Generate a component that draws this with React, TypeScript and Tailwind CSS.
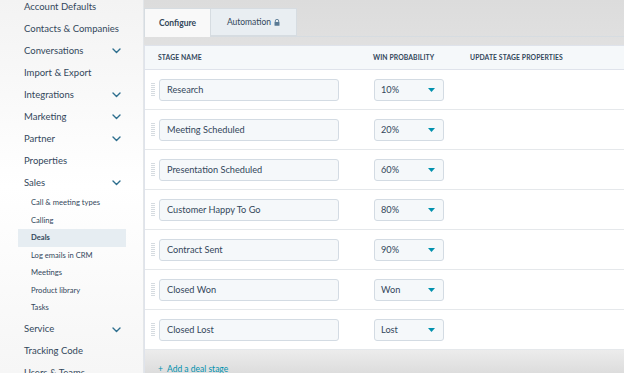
import React from "react";

const mainFont = { fontFamily: "Lato, 'Open Sans', sans-serif" };

function Chevron() {
  return (
    <svg width="9" height="6" viewBox="0 0 9 6" className="text-[#2d6e8e]">
      <path d="M1 1l3.5 3.5L8 1" fill="none" stroke="currentColor" strokeWidth="1.4" strokeLinecap="round" strokeLinejoin="round" />
    </svg>
  );
}

function MainItem({ label, chevron }: { label: string; chevron?: boolean }) {
  return (
    <div className="h-[22px] flex items-center justify-between pl-[24px] pr-[22px] text-[9.5px] text-[#33475b]">
      <span>{label}</span>
      {chevron && <Chevron />}
    </div>
  );
}

function SubItem({ label, active }: { label: string; active?: boolean }) {
  return (
    <div
      className={
        "h-[17.5px] flex items-center ml-[18px] mr-[17px] pl-[13px] text-[7.6px] text-[#33475b] " +
        (active ? "bg-[#e6edf2] font-bold" : "")
      }
    >
      {label}
    </div>
  );
}

function Handle() {
  return (
    <div className="flex flex-col gap-[1px] w-[4px] mr-[4px]">
      {Array.from({ length: 7 }).map((_, i) => (
        <div key={i} className="h-[1px] w-[4px] bg-[#d5dbe0]" />
      ))}
    </div>
  );
}

const rows: [string, string][] = [
  ["Research", "10%"],
  ["Meeting Scheduled", "20%"],
  ["Presentation Scheduled", "60%"],
  ["Customer Happy To Go", "80%"],
  ["Contract Sent", "90%"],
  ["Closed Won", "Won"],
  ["Closed Lost", "Lost"],
];

export default function App() {
  return (
    <div className="w-[624px] h-[373px] overflow-hidden flex bg-white text-[#33475b]" style={mainFont}>
      {/* Sidebar */}
      <div className="w-[144px] shrink-0 bg-gradient-to-b from-[#f3f3f3] via-white to-[#f6f6f6] border-r border-[#e3e6e9]">
        <div className="mt-[-4px]">
          <MainItem label="Account Defaults" />
          <MainItem label="Contacts & Companies" />
          <MainItem label="Conversations" chevron />
          <MainItem label="Import & Export" />
          <MainItem label="Integrations" chevron />
          <MainItem label="Marketing" chevron />
          <MainItem label="Partner" chevron />
          <MainItem label="Properties" />
          <MainItem label="Sales" chevron />
          <div className="mb-[2px]">
            <SubItem label="Call & meeting types" />
            <SubItem label="Calling" />
            <SubItem label="Deals" active />
            <SubItem label="Log emails in CRM" />
            <SubItem label="Meetings" />
            <SubItem label="Product library" />
            <SubItem label="Tasks" />
          </div>
          <MainItem label="Service" chevron />
          <MainItem label="Tracking Code" />
          <MainItem label="Users & Teams" />
        </div>
      </div>

      {/* Main */}
      <div className="flex-1 flex flex-col bg-gradient-to-b from-[#dcdcdc] via-[#eeeeee] to-[#f2f2f2]">
        {/* Tabs */}
        <div className="pt-[8px] mb-[8px]">
          <div className="flex h-[29px] border-b border-[#d6dce1] w-full">
            <div className="w-[67px] h-[29px] flex items-center justify-center bg-[#f9f9f9] border border-[#d6dce1] border-b-0 text-[8.5px] font-bold text-[#33475b]">
              Configure
            </div>
            <div className="w-[86px] h-[28px] flex items-center justify-center bg-[#e9eef2] border border-l-0 border-[#d6dce1] text-[8.5px] text-[#33475b] gap-[3px]">
              Automation
              <svg width="6" height="7" viewBox="0 0 6 7">
                <path d="M1.3 3V2a1.7 1.7 0 013.4 0v1" fill="none" stroke="#5a7a94" strokeWidth="0.9" />
                <rect x="0.5" y="3" width="5" height="3.8" rx="0.6" fill="#5a7a94" />
              </svg>
            </div>
            <div className="flex-1" />
          </div>
        </div>

        {/* Table */}
        <div className="border-l border-t border-[#dfe3eb] bg-white flex flex-col">
          <div className="h-[24px] flex items-center bg-[#f5f8fa] border-b border-[#dfe3eb] text-[6.8px] font-bold text-[#33475b] tracking-[0.1px]">
            <div className="pl-[13px] w-[228px]">STAGE NAME</div>
            <div className="w-[97px]">WIN PROBABILITY</div>
            <div>UPDATE STAGE PROPERTIES</div>
          </div>
          {rows.map(([name, prob]) => (
            <div key={name} className="h-[40px] flex items-center border-b border-[#e5e8eb] pl-[6px]">
              <Handle />
              <div className="w-[180px] h-[22px] flex items-center pl-[7px] bg-[#f5f8fa] border border-[#d3dbe3] rounded-[3px] text-[9.2px] text-[#33475b]">
                {name}
              </div>
              <div className="w-[35px]" />
              <div className="w-[70px] h-[22px] flex items-center justify-between pl-[6px] pr-[8px] bg-[#f5f8fa] border border-[#d3dbe3] rounded-[3px] text-[9.2px] text-[#33475b]">
                <span>{prob}</span>
                <svg width="7" height="4" viewBox="0 0 7 4">
                  <path d="M0 0h7L3.5 4z" fill="#0091ae" />
                </svg>
              </div>
            </div>
          ))}
          <div className="h-[30px] bg-gradient-to-b from-[#ececec] to-[#d8d8d8] flex items-start pt-[13px] pl-[13px] text-[8.5px] text-[#0091ae]">
            <span>+&nbsp; Add a deal stage</span>
          </div>
        </div>
      </div>
    </div>
  );
}
